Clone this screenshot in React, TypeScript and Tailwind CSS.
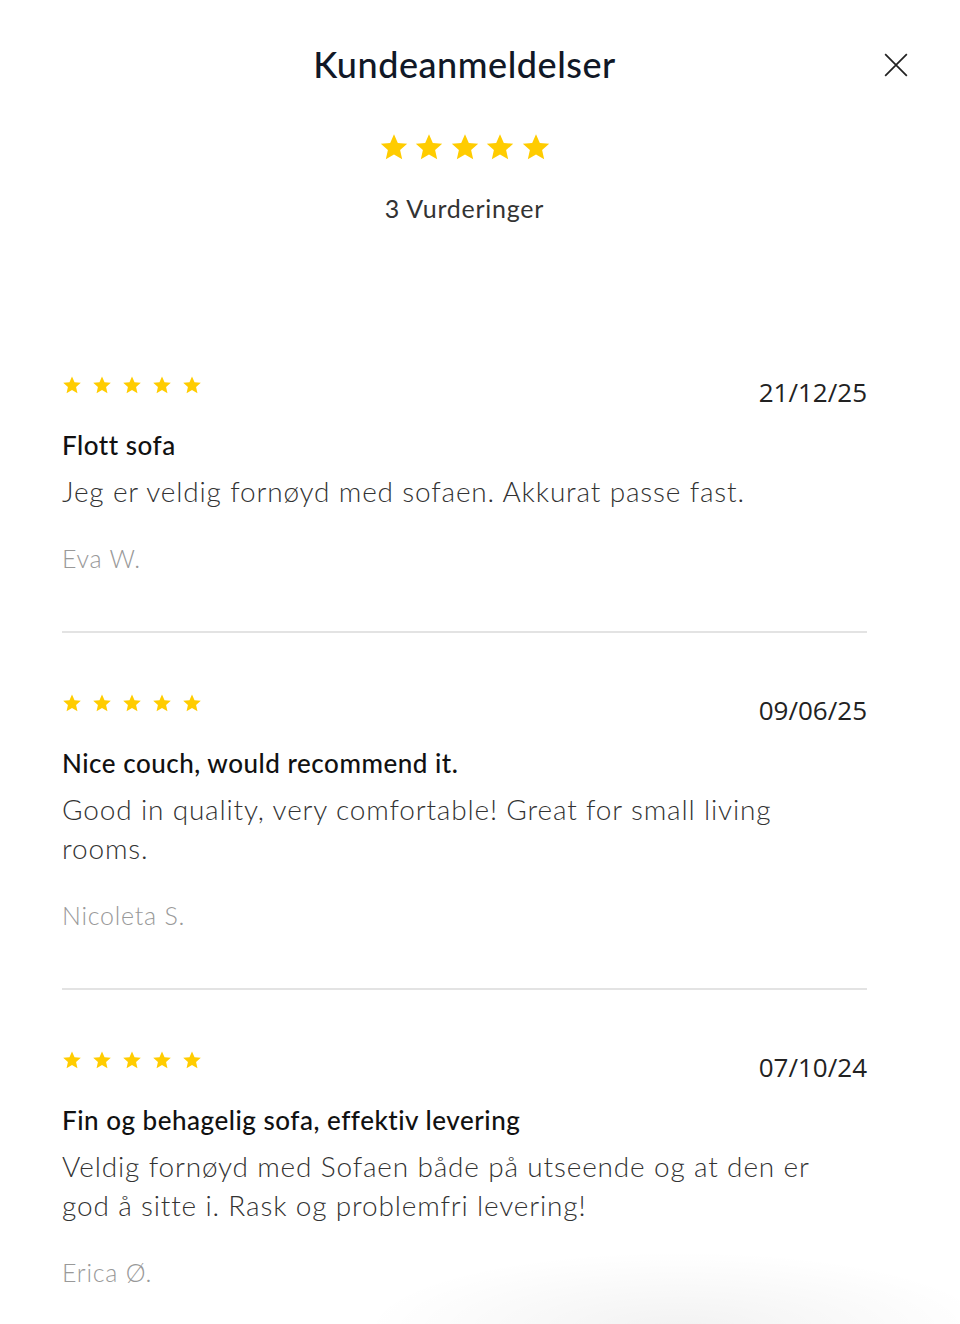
const reviews = [
  {
    date: '21/12/25',
    title: 'Flott sofa',
    body: 'Jeg er veldig fornøyd med sofaen. Akkurat passe fast.',
    author: 'Eva W.',
  },
  {
    date: '09/06/25',
    title: 'Nice couch, would recommend it.',
    body: 'Good in quality, very comfortable! Great for small living rooms.',
    author: 'Nicoleta S.',
  },
  {
    date: '07/10/24',
    title: 'Fin og behagelig sofa, effektiv levering',
    body: 'Veldig fornøyd med Sofaen både på utseende og at den er god å sitte i. Rask og problemfri levering!',
    author: 'Erica Ø.',
  },
];

function Star({ className }: { className: string }) {
  return (
    <svg viewBox="0 0 24 24" className={className} fill="#FFCC00">
      <path d="M12 1.8l3.05 6.9 7.5.72-5.66 5.02 1.64 7.36L12 17.98 5.47 21.8l1.64-7.36L1.45 9.42l7.5-.72L12 1.8z" />
    </svg>
  );
}

function Stars({ size, gap }: { size: string; gap: string }) {
  return (
    <div className={`flex items-center ${gap}`}>
      {[0, 1, 2, 3, 4].map((i) => (
        <Star key={i} className={size} />
      ))}
    </div>
  );
}

export default function App() {
  return (
    <div className="relative min-h-[1324px] w-[960px] overflow-hidden bg-white font-['Lato',sans-serif] text-[#111]">
      {/* Close */}
      <button className="absolute left-[882px] top-[51px] flex h-[28px] w-[28px] items-center justify-center">
        <svg viewBox="0 0 24 24" className="h-[26px] w-[26px]" fill="none" stroke="#222" strokeWidth="1.6">
          <path d="M2 2l20 20M22 2L2 22" />
        </svg>
      </button>

      <div className="ml-[62px] w-[805px]">
        {/* Header */}
        <div className="flex flex-col items-center pt-[41px]">
          <h1 className="text-[36px] leading-[46px] font-medium tracking-[0.015em] text-[#111827]">Kundeanmeldelser</h1>
          <div className="mt-[45px]">
            <div className="flex items-center gap-[5.5px]">
              {[0, 1, 2, 3, 4].map((i) => (
                <Star key={i} className="h-[30px] w-[30px]" />
              ))}
            </div>
          </div>
          <p className="mt-[30px] text-[25px] leading-[32px] tracking-[0.03em] text-[#333]">3 Vurderinger</p>
        </div>

        {/* Reviews */}
        <div className="mt-[151px]">
          {reviews.map((r, idx) => (
            <div key={r.date}>
              {idx > 0 && <div className="h-[60px]" />}
              <div className="flex items-start justify-between">
                <Stars size="h-[20px] w-[20px]" gap="gap-[10px]" />
                <span className="mt-[2px] font-['Open_Sans',sans-serif] text-[26px] leading-[30px] text-[#222]">
                  {r.date}
                </span>
              </div>
              <h2 className="mt-[21px] text-[26px] leading-[34px] font-medium tracking-[0.02em] text-[#111]">{r.title}</h2>
              <p className="mt-[10px] max-w-[770px] text-[28px] leading-[39px] font-light tracking-[0.03em] text-[#333]">
                {r.body}
              </p>
              <p className="mt-[32px] text-[25px] leading-[30px] font-light tracking-[0.03em] text-[#999]">{r.author}</p>
              {idx < reviews.length - 1 && <div className="mt-[58px] h-[2px] bg-[#e3e3e3]" />}
            </div>
          ))}
        </div>
      </div>

      {/* Faint floating shadow at the bottom */}
      <div className="pointer-events-none absolute left-[360px] top-[1250px] h-[160px] w-[640px] rounded-full bg-[radial-gradient(ellipse_at_center,rgba(0,0,0,0.05),rgba(0,0,0,0)_70%)]" />
    </div>
  );
}
